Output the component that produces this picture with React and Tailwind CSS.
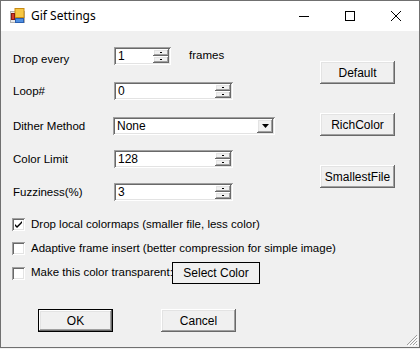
import React from 'react';

const raised = 'shadow-[inset_-1px_-1px_0_#696969,inset_1px_1px_0_#ffffff,inset_-2px_-2px_0_#a0a0a0,inset_2px_2px_0_#e3e3e3]';
const sunken = 'shadow-[inset_1px_1px_0_#a0a0a0,inset_-1px_-1px_0_#ffffff,inset_2px_2px_0_#696969,inset_-2px_-2px_0_#e3e3e3]';

function SpinBox({ value, width }) {
  return (
    <div className={`flex h-[18px] bg-white p-[2px] ${width} ${sunken}`}>
      <div className="flex-1 pl-[2px] text-[12px] leading-[14px] text-black">{value}</div>
      <div className="flex w-[16px] flex-col">
        <div className={`flex h-[7px] items-center justify-center bg-[#f0f0f0] ${raised}`}>
          <div className="h-[1px] w-[2px] bg-black" />
        </div>
        <div className={`flex h-[7px] items-center justify-center bg-[#f0f0f0] ${raised}`}>
          <div className="h-[1px] w-[2px] bg-black" />
        </div>
      </div>
    </div>
  );
}

function Combo({ value }) {
  return (
    <div className={`flex h-[18px] w-[162px] bg-white p-[2px] ${sunken}`}>
      <div className="flex-1 pl-[2px] text-[12px] leading-[14px] text-black">{value}</div>
      <div className={`flex w-[16px] items-center justify-center bg-[#f0f0f0] ${raised}`}>
        <svg width="7" height="4" viewBox="0 0 7 4">
          <path d="M0 0h7L3.5 4z" fill="#000" />
        </svg>
      </div>
    </div>
  );
}

function Button({ children, width = 'w-[75px]', primary }) {
  return (
    <div className={`h-[23px] ${width} ${primary ? 'border border-black' : ''}`}>
      <div className={`flex h-full w-full items-center justify-center bg-[#f0f0f0] text-[12px] text-black ${raised}`}>
        {children}
      </div>
    </div>
  );
}

function CheckBox({ checked }) {
  return (
    <div className={`flex h-[13px] w-[13px] shrink-0 items-center justify-center bg-white ${sunken}`}>
      {checked && (
        <svg width="9" height="9" viewBox="0 0 9 9">
          <path d="M1 4l2 2 5-5v2l-5 5-2-2z" fill="#000" />
        </svg>
      )}
    </div>
  );
}

function Row({ label, children, top, labelPad = 'pt-[2px]' }) {
  return (
    <div className={`flex h-[18px] items-center ${top}`}>
      <div className={`w-[101px] text-[11.5px] text-black ${labelPad}`}>{label}</div>
      {children}
    </div>
  );
}

export default function App() {
  return (
    <div className="h-[349px] w-[420px] bg-[#f0f0f0] font-['Liberation_Sans',Arial,sans-serif]">
      <div className="relative flex h-[348px] w-[420px] flex-col border border-[#707070] bg-[#f0f0f0]">
        {/* Title bar */}
        <div className="flex h-[30px] items-center bg-white">
          <svg className="ml-[9px]" width="16" height="16" viewBox="0 0 16 16">
            <rect x="0.5" y="3.5" width="14" height="11" fill="#e8e8e8" stroke="#b0b0b0" />
            <rect x="5" y="0.5" width="9" height="9" fill="#f6c744" stroke="#c98a12" />
            <rect x="1.5" y="5.5" width="3" height="6" fill="#d23a2a" stroke="#8a1a10" />
            <rect x="5.5" y="10.5" width="8" height="4" fill="#4f8fe0" stroke="#2a5fb0" />
          </svg>
          <span className="ml-[5px] font-['Noto_Sans',sans-serif] text-[12px] text-black">Gif Settings</span>
          <div className="ml-auto flex h-full">
            <div className="flex w-[46px] items-center justify-center">
              <svg width="10" height="10" viewBox="0 0 10 10">
                <path d="M0 5.5h10" stroke="#000" strokeWidth="1" />
              </svg>
            </div>
            <div className="flex w-[46px] items-center justify-center">
              <svg width="10" height="10" viewBox="0 0 10 10">
                <rect x="0.5" y="0.5" width="9" height="9" fill="none" stroke="#000" />
              </svg>
            </div>
            <div className="flex w-[46px] items-center justify-center">
              <svg width="10" height="10" viewBox="0 0 10 10">
                <path d="M0 0L10 10M10 0L0 10" stroke="#000" strokeWidth="1" />
              </svg>
            </div>
          </div>
        </div>

        {/* Body */}
        <div className="flex flex-1 flex-col">
          <div className="flex">
            <div className="flex w-[300px] flex-col pl-[12px]">
              <Row label="Drop every" top="mt-[16px]" labelPad="pt-[8px]">
                <SpinBox value="1" width="w-[57px]" />
                <span className="ml-[18px] text-[11.5px] text-black">frames</span>
              </Row>
              <Row label="Loop#" top="mt-[17px]">
                <SpinBox value="0" width="w-[119px]" />
              </Row>
              <Row label="Dither Method" top="mt-[17px]">
                <div className="-ml-[1px]">
                  <Combo value="None" />
                </div>
              </Row>
              <Row label="Color Limit" top="mt-[15px]">
                <SpinBox value="128" width="w-[119px]" />
              </Row>
              <Row label="Fuzziness(%)" top="mt-[15px]">
                <SpinBox value="3" width="w-[119px]" />
              </Row>
            </div>
            <div className="ml-[19px] flex flex-col gap-[29px] pt-[30px]">
              <Button>Default</Button>
              <Button>RichColor</Button>
              <Button>SmallestFile</Button>
            </div>
          </div>

          <div className="mt-[17px] flex flex-col pl-[11px]">
            <div className="flex h-[13px] items-center">
              <CheckBox checked />
              <span className="ml-[6px] text-[11.5px] text-black">Drop local colormaps (smaller file, less color)</span>
            </div>
            <div className="mt-[11px] flex h-[13px] items-center">
              <CheckBox />
              <span className="ml-[6px] text-[11.5px] text-black">Adaptive frame insert (better compression for simple image)</span>
            </div>
            <div className="mt-[7px] flex h-[22px] items-center">
              <CheckBox />
              <span className="ml-[6px] w-[141px] whitespace-nowrap text-[11.5px] text-black">Make this color transparent:</span>
              <div className="relative flex h-[22px] w-[88px] items-center justify-center border border-black bg-[#f0f0f0] text-[12px] text-black">
                Select Color
              </div>
            </div>
          </div>

          <div className="mt-[25px] flex pl-[37px]">
            <Button primary>OK</Button>
            <div className="ml-[48px]">
              <Button>Cancel</Button>
            </div>
          </div>
        </div>

        {/* Resize grip */}
        <svg className="absolute bottom-[1px] right-[1px]" width="12" height="12" viewBox="0 0 12 12">
          <path d="M11 1L1 11M11 4L4 11M11 7L7 11M11 10L10 11" stroke="#a0a0a0" strokeWidth="1" />
          <path d="M12 2L2 12M12 5L5 12M12 8L8 12" stroke="#ffffff" strokeWidth="1" />
        </svg>
      </div>
    </div>
  );
}
